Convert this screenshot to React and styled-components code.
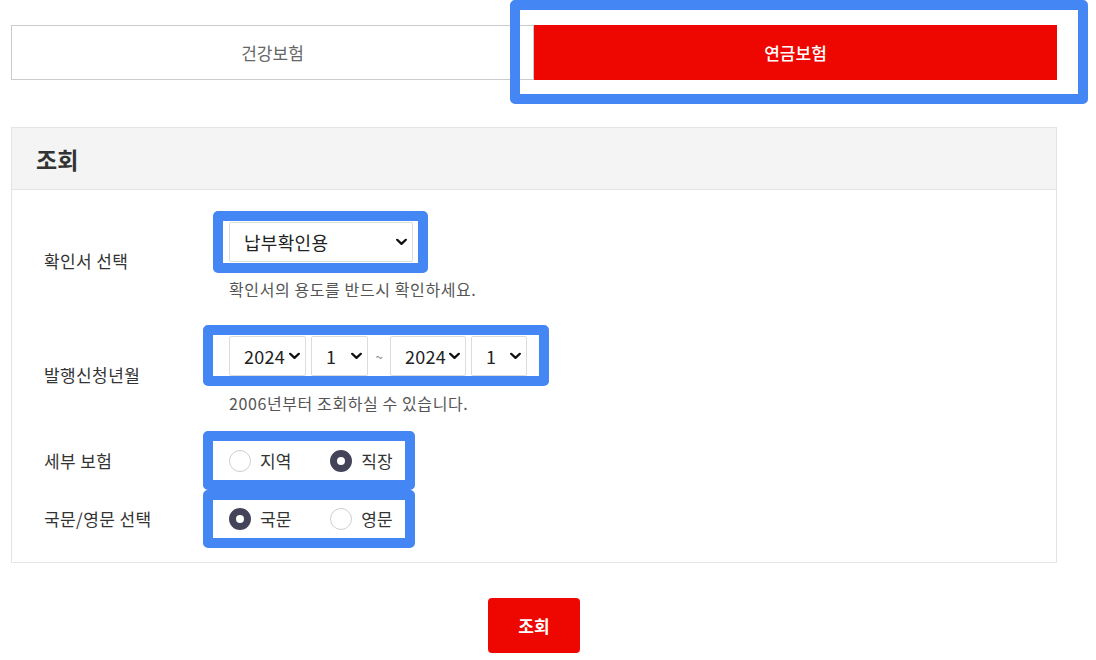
import React from 'react'
import styled, { createGlobalStyle } from 'styled-components'

const GlobalStyle = createGlobalStyle`
  body {
    margin: 0;
    background: #fff;
    font-family: "Noto Sans CJK KR", "Noto Sans", sans-serif;
    color: #333;
  }
`

const Chevron = () => (
  <svg width="11" height="7" viewBox="0 0 11 7">
    <path d="M1.2 1.2 L5.5 5.4 L9.8 1.2" fill="none" stroke="#111" strokeWidth="2.3" strokeLinecap="round" strokeLinejoin="round" />
  </svg>
)

const Select = ({ width, value, options }) => (
  <SelectBox $width={width}>
    <NativeSelect defaultValue={value}>
      {options.map(o => <option key={o}>{o}</option>)}
    </NativeSelect>
    <Arrow><Chevron /></Arrow>
  </SelectBox>
)

const Radio = ({ label, checked, name }) => (
  <RadioItem>
    <RadioInput type="radio" name={name} defaultChecked={checked} />
    <span>{label}</span>
  </RadioItem>
)

export default function App() {
  return (
    <Page>
      <GlobalStyle />
      <Tabs>
        <Tab>건강보험</Tab>
        <Highlight $t={25} $r={31} $b={24} $l={24} $block>
          <Tab $active>연금보험</Tab>
        </Highlight>
      </Tabs>

      <Panel>
        <PanelHead>조회</PanelHead>
        <PanelBody>
          <Row>
            <Label>확인서 선택</Label>
            <Field>
              <Highlight $t={11} $r={15} $b={11} $l={16}>
                <Select width={184} value="납부확인용" options={['납부확인용', '소득공제용']} />
              </Highlight>
              <Help>확인서의 용도를 반드시 확인하세요.</Help>
            </Field>
          </Row>

          <Row>
            <Label>발행신청년월</Label>
            <Field>
              <Highlight $t={11} $r={22} $b={10} $l={26}>
                <DateGroup>
                  <Select width={77} value="2024" options={['2024', '2023']} />
                  <Select width={57} value="1" options={['1', '2', '3']} />
                  <Tilde>~</Tilde>
                  <Select width={76} value="2024" options={['2024', '2023']} />
                  <Select width={56} value="1" options={['1', '2', '3']} />
                </DateGroup>
              </Highlight>
              <Help>2006년부터 조회하실 수 있습니다.</Help>
            </Field>
          </Row>

          <Row>
            <Label>세부 보험</Label>
            <Field>
              <Highlight $t={19} $r={22} $b={18} $l={26}>
                <RadioGroup>
                  <Radio name="type" label="지역" />
                  <Radio name="type" label="직장" checked />
                </RadioGroup>
              </Highlight>
            </Field>
          </Row>

          <Row>
            <Label>국문/영문 선택</Label>
            <Field>
              <Highlight $t={18} $r={22} $b={18} $l={26}>
                <RadioGroup>
                  <Radio name="lang" label="국문" checked />
                  <Radio name="lang" label="영문" />
                </RadioGroup>
              </Highlight>
            </Field>
          </Row>
        </PanelBody>
      </Panel>

      <SubmitButton>조회</SubmitButton>
    </Page>
  )
}

const Page = styled.div`
  width: 1046px;
  margin-left: 11px;
  padding-top: 25px;
`

const Tabs = styled.div`
  display: grid;
  grid-template-columns: 1fr 1fr;
  height: 55px;
`

const Tab = styled.div`
  display: flex;
  align-items: center;
  justify-content: center;
  height: 55px;
  box-sizing: border-box;
  font-size: 17px;
  border: 1px solid ${p => (p.$active ? '#ee0700' : '#c9cbce')};
  background: ${p => (p.$active ? '#ee0700' : '#fff')};
  color: ${p => (p.$active ? '#fff' : '#666')};
  font-weight: ${p => (p.$active ? 500 : 400)};
`

const Highlight = styled.div`
  position: relative;
  display: ${p => (p.$block ? 'block' : 'inline-flex')};
  align-self: flex-start;
  &::after {
    content: '';
    position: absolute;
    top: -${p => p.$t}px;
    right: -${p => p.$r}px;
    bottom: -${p => p.$b}px;
    left: -${p => p.$l}px;
    border: 10px solid #4486f3;
    border-radius: 5px;
    pointer-events: none;
    z-index: 2;
  }
`

const Panel = styled.section`
  margin-top: 47px;
  border: 1px solid #e4e4e4;
`

const PanelHead = styled.h2`
  margin: 0;
  height: 61px;
  display: flex;
  align-items: center;
  padding-left: 24px;
  background: #f4f4f4;
  border-bottom: 1px solid #e4e4e4;
  font-size: 23px;
  font-weight: 700;
  color: #333;
`

const PanelBody = styled.div`
  display: flex;
  flex-direction: column;
  gap: 36px;
  padding: 32px 0 32px;
`

const Row = styled.div`
  display: grid;
  grid-template-columns: 217px 1fr;
  align-items: center;
`

const Label = styled.div`
  padding-left: 32px;
  font-size: 17px;
  line-height: 22px;
  letter-spacing: 0.4px;
  color: #333;
`

const Field = styled.div`
  display: flex;
  flex-direction: column;
  align-items: flex-start;
`

const Help = styled.p`
  margin: 16px 0 0;
  font-size: 16px;
  letter-spacing: 0.6px;
  line-height: 22px;
  color: #555;
`

const SelectBox = styled.div`
  position: relative;
  width: ${p => p.$width}px;
  height: 40px;
`

const NativeSelect = styled.select`
  appearance: none;
  width: 100%;
  height: 100%;
  box-sizing: border-box;
  border: 1px solid #dcdcdc;
  border-radius: 2px;
  background: #fff;
  padding: 0 0 0 14px;
  font-family: inherit;
  font-size: 18px;
  letter-spacing: 0.3px;
  color: #222;
  outline: none;
`

const Arrow = styled.span`
  position: absolute;
  right: 6px;
  top: 50%;
  transform: translateY(-50%);
  display: flex;
  pointer-events: none;
`

const DateGroup = styled.div`
  display: flex;
  align-items: center;
  gap: 5px;
`

const Tilde = styled.span`
  width: 12px;
  text-align: center;
  font-size: 13px;
  color: #888;
`

const RadioGroup = styled.div`
  display: flex;
  align-items: center;
  gap: 39px;
  height: 22px;
`

const RadioItem = styled.label`
  display: flex;
  align-items: center;
  gap: 9px;
  height: 22px;
  font-size: 17px;
  line-height: 22px;
  color: #333;
`

const RadioInput = styled.input`
  appearance: none;
  margin: 0;
  width: 22px;
  height: 22px;
  border-radius: 50%;
  border: 1px solid #cfcfd4;
  background: #fff;
  box-sizing: border-box;
  &:checked {
    border: 7px solid #43435a;
    background: #fff;
  }
`

const SubmitButton = styled.button`
  display: block;
  margin: 35px auto 0;
  width: 92px;
  height: 55px;
  border: none;
  border-radius: 4px;
  background: #ee0700;
  color: #fff;
  font-family: inherit;
  font-size: 17px;
  font-weight: 700;
`
